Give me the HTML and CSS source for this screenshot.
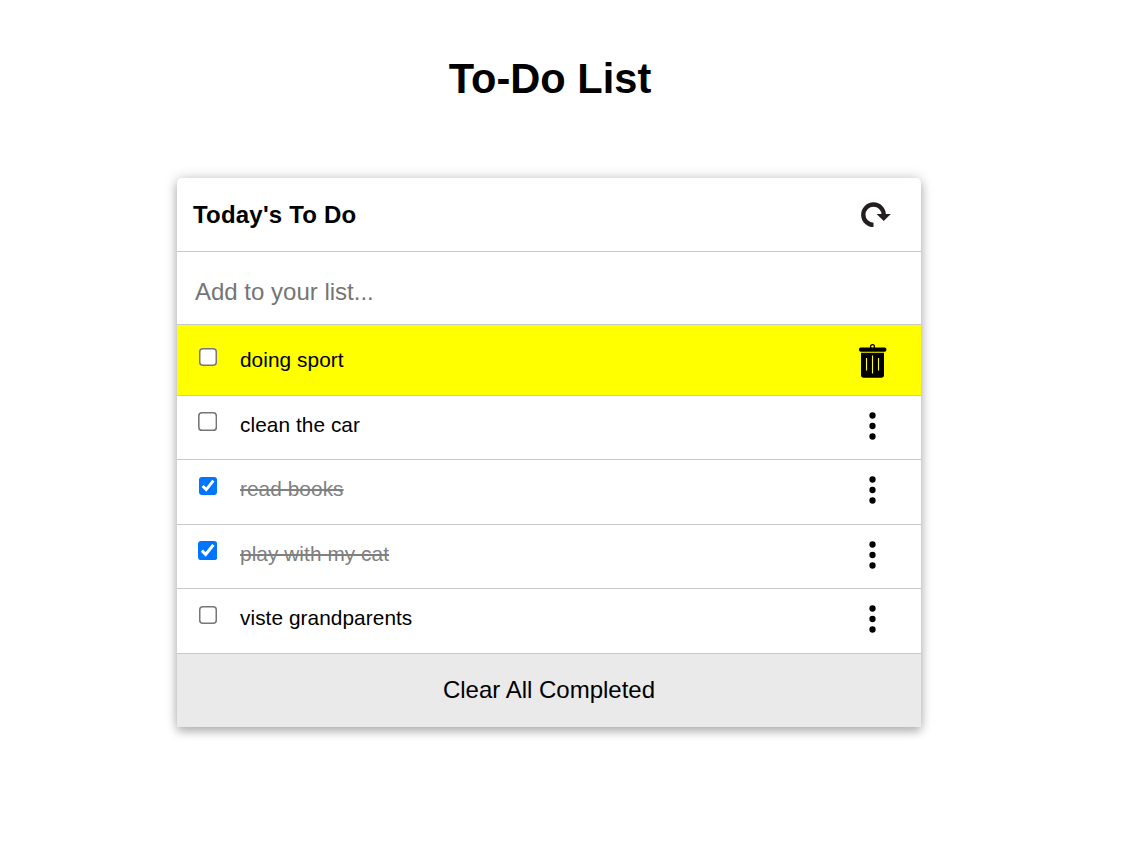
FILE: index.html
```html
<!DOCTYPE html>
<html lang="en">
<head>
<meta charset="utf-8">
<title>To-Do List</title>
<link rel="stylesheet" href="styles.css">
</head>
<body>
<svg class="sprite" aria-hidden="true">
  <symbol id="dots" viewBox="0 0 8 28"><circle cx="4.5" cy="3.5" r="3.15"/><circle cx="4.5" cy="14" r="3.15"/><circle cx="4.5" cy="24.5" r="3.15"/></symbol>
</svg>
<h1 class="title">To-Do List</h1>
<main class="card">
  <header class="head">
    <h2 class="subtitle">Today's To Do</h2>
    <svg class="refresh" viewBox="0 0 30 26"><path d="M12.5 22.9A10.2 10.2 0 1 1 22.7 12.7" fill="none" stroke="#231f20" stroke-width="4.4"/><path d="M15.6 12H29.8L22.7 19Z" fill="#231f20"/></svg>
  </header>
  <input class="add" type="text" placeholder="Add to your list...">
  <ul class="list">
    <li class="item active"><input class="check" type="checkbox"><span class="label">doing sport</span>
      <svg class="trash" viewBox="0 0 28 35"><circle cx="13.5" cy="2.7" r="2" fill="none" stroke="#000" stroke-width="1.2"/><rect x="0" y="3.5" width="27.4" height="4.2" rx="1.8"/><path d="M2 8.8H25V31Q25 33.7 22.3 33.7H4.7Q2 33.7 2 31Z"/><path d="M7.5 14V26.5M13.5 11.5V29.5M19.5 14V26.5" stroke="#ff0" stroke-width="1.1"/></svg></li>
    <li class="item"><input class="check large" type="checkbox"><span class="label">clean the car</span><svg class="dots"><use href="#dots"/></svg></li>
    <li class="item tall"><input class="check" type="checkbox" checked><span class="label done">read books</span><svg class="dots"><use href="#dots"/></svg></li>
    <li class="item"><input class="check large" type="checkbox" checked><span class="label done">play with my cat</span><svg class="dots"><use href="#dots"/></svg></li>
    <li class="item tall"><input class="check" type="checkbox"><span class="label">viste grandparents</span><svg class="dots"><use href="#dots"/></svg></li>
  </ul>
  <button class="clear" type="button">Clear All Completed</button>
</main>
</body>
</html>
```

FILE: styles.css
```css
* { box-sizing: border-box; }
html { background: #fff; }
body {
  display: flow-root;
  min-height: 100vh;
  margin: 0;
  color: #000;
  font-family: "Liberation Sans", Arial, sans-serif;
}
.sprite { display: none; }
.title {
  width: 744px;
  margin: 55px 0 0 178px;
  font-size: 41.6px;
  line-height: 48px;
  text-align: center;
}
.card {
  display: flex;
  flex-direction: column;
  width: 744px;
  height: 549px;
  margin: 75px 0 0 177px;
  border-radius: 5px 5px 2px 2px;
  box-shadow: 0 5px 10px rgba(0, 0, 0, .22), 0 0 13px rgba(0, 0, 0, .2);
  background: #fff;
}
.head {
  display: flex;
  align-items: center;
  justify-content: space-between;
  height: 74px;
  padding: 0 30px 0 16px;
  border-bottom: 1px solid #c8c8c8;
}
.subtitle { margin: 0; font-size: 24px; letter-spacing: .2px; }
.refresh { width: 30px; height: 26px; }
.add {
  height: 73px;
  padding: 8px 18px 0;
  border: 0;
  border-bottom: 1px solid #c8c8c8;
  background: transparent;
  font: 24px "Liberation Sans", Arial, sans-serif;
}
.add::placeholder { color: #757575; }
.list { margin: 0; padding: 0; list-style: none; }
.item {
  display: flex;
  align-items: center;
  height: 64px;
  padding: 0 45px 6px 22px;
  border-bottom: 1px solid #c8c8c8;
}
.item.tall { height: 65px; }
.item.active { height: 71px; padding: 0 34px 0 22px; background: #ff0; }
.check { zoom: 1.5; width: 12px; height: 12px; margin: 0 15.33px 4px 0; }
.check.large { zoom: 1.6; width: 12.5px; height: 12.5px; margin: 0 13.75px 3.75px -.625px; }
.label { flex: 1; font-size: 20.8px; line-height: 24px; letter-spacing: .07px; }
.done { color: #808080; text-decoration: line-through 2px; }
.dots { width: 8px; height: 28px; margin-top: 2px; }
.trash { width: 28px; height: 35px; margin-top: 2px; }
.clear {
  height: 73px;
  padding: 0 0 2px;
  border: 0;
  border-radius: 0 0 2px 2px;
  background: #eaeaea;
  color: #000;
  font: 24px "Liberation Sans", Arial, sans-serif;
}
```
